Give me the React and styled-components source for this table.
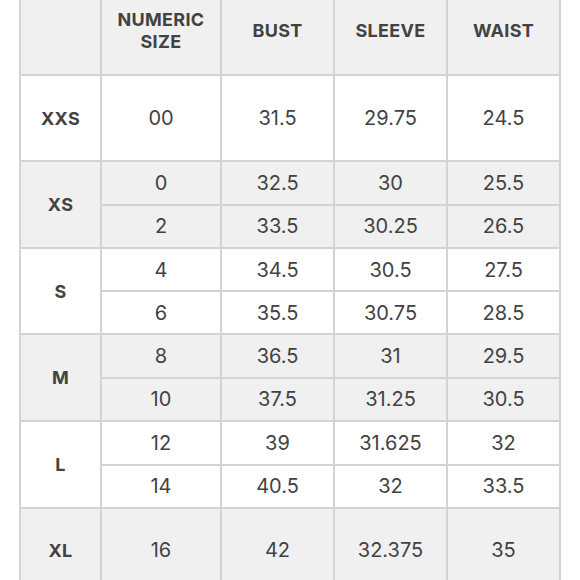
import React from "react";
import styled, { createGlobalStyle } from "styled-components";

const GlobalStyle = createGlobalStyle`
  html, body {
    margin: 0;
    padding: 0;
    background: #ffffff;
  }
  body {
    width: 580px;
    height: 580px;
    overflow: hidden;
    font-family: Inter, "Noto Sans", sans-serif;
  }
`;

const Page = styled.div`
  padding: 0 19px;
`;

const Table = styled.table`
  border-collapse: collapse;
  margin-top: -14px;
  table-layout: fixed;
  width: 542px;
  color: #424242;
`;

const Col = styled.col`
  width: ${({ $w }) => $w}px;
`;

const HeadCell = styled.th`
  background: #f0f0f0;
  border: 2px solid #d3d3d3;
  height: 86px;
  padding: 0;
  font-size: 18px;
  font-weight: 700;
  line-height: 22px;
  letter-spacing: 0.3px;
  text-align: center;
  vertical-align: middle;
`;

const Row = styled.tr`
  background: ${({ $shade }) => ($shade ? "#f0f0f0" : "#ffffff")};
  height: ${({ $h }) => $h}px;
`;

const SizeCell = styled.td`
  border: 2px solid #d3d3d3;
  text-align: center;
  vertical-align: middle;
  font-size: 18px;
  font-weight: 700;
  letter-spacing: 0.3px;
  padding: 0;
`;

const Cell = styled.td`
  border: 2px solid #d3d3d3;
  text-align: center;
  vertical-align: middle;
  font-size: 20px;
  font-weight: 400;
  padding: 0;
`;

const groups = [
  { size: "XXS", shade: false, h: 86, rows: [["00", "31.5", "29.75", "24.5"]] },
  {
    size: "XS",
    shade: true,
    h: 43.5,
    rows: [
      ["0", "32.5", "30", "25.5"],
      ["2", "33.5", "30.25", "26.5"],
    ],
  },
  {
    size: "S",
    shade: false,
    h: 43,
    rows: [
      ["4", "34.5", "30.5", "27.5"],
      ["6", "35.5", "30.75", "28.5"],
    ],
  },
  {
    size: "M",
    shade: true,
    h: 43.5,
    rows: [
      ["8", "36.5", "31", "29.5"],
      ["10", "37.5", "31.25", "30.5"],
    ],
  },
  {
    size: "L",
    shade: false,
    h: 43.5,
    rows: [
      ["12", "39", "31.625", "32"],
      ["14", "40.5", "32", "33.5"],
    ],
  },
  { size: "XL", shade: true, h: 84, rows: [["16", "42", "32.375", "35"]] },
];

export default function App() {
  return (
    <Page>
      <GlobalStyle />
      <Table>
        <colgroup>
          <Col $w={81} />
          <Col $w={120} />
          <Col $w={113} />
          <Col $w={113} />
          <Col $w={113} />
        </colgroup>
        <thead>
          <tr>
            <HeadCell />
            <HeadCell>
              NUMERIC
              <br />
              SIZE
            </HeadCell>
            <HeadCell>BUST</HeadCell>
            <HeadCell>SLEEVE</HeadCell>
            <HeadCell>WAIST</HeadCell>
          </tr>
        </thead>
        <tbody>
          {groups.map((g) =>
            g.rows.map((r, i) => (
              <Row key={g.size + i} $shade={g.shade} $h={g.h}>
                {i === 0 && <SizeCell rowSpan={g.rows.length}>{g.size}</SizeCell>}
                {r.map((v, j) => (
                  <Cell key={j}>{v}</Cell>
                ))}
              </Row>
            ))
          )}
        </tbody>
      </Table>
    </Page>
  );
}
